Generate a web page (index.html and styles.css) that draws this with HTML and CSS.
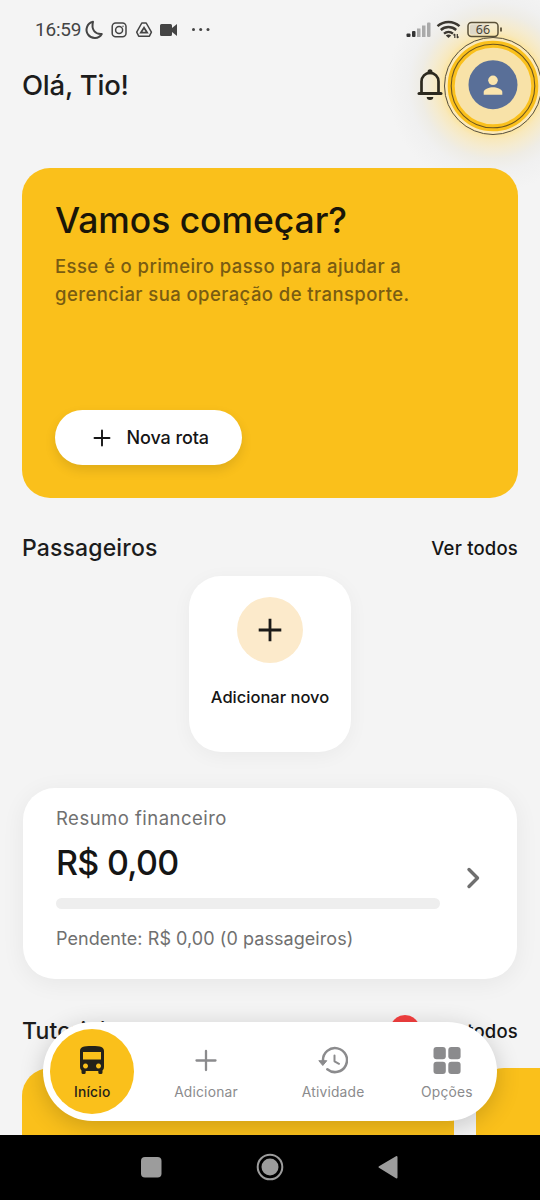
FILE: index.html
```html
<!DOCTYPE html>
<html lang="pt-BR">
<head>
<meta charset="utf-8">
<meta name="viewport" content="width=device-width, initial-scale=1">
<title>Início</title>
<link rel="stylesheet" href="styles.css">
</head>
<body>
<div class="app">
  <div class="status">
    <div class="status-left">
      <span class="clock">16:59</span>
      <svg class="status-icons" width="130" height="24" viewBox="0 0 130 24" fill="none" stroke="#444" stroke-width="1.800">
        <path d="M9 3.800A8.200 8.200 0 1 0 17.800 16C11 16.500 7 11.500 9 3.800Z" stroke-width="2" stroke-linejoin="round"/>
        <rect x="28.200" y="5" width="13.800" height="13.800" rx="3.500" stroke-width="1.500"/>
        <circle cx="35.100" cy="12" r="3.500" stroke-width="1.500"/><circle cx="39" cy="8.200" r=".7" fill="#444" stroke="none"/>
        <path d="M57.800 5h4.400l5.200 9.200-2 4H54.700l-2-4Z" stroke-width="1.500" stroke-linejoin="round"/>
        <path d="M60 9.700l-3.200 5h6.400Z" stroke-width="1.700"/>
        <path d="M77.500 6h9q1.500 0 1.500 1.500V10l5-4v12l-5-4v2.500q0 1.500-1.500 1.500h-9q-1.500 0-1.500-1.500v-9q0-1.500 1.500-1.500Z" fill="#444" stroke="none"/>
        <g fill="#444" stroke="none"><circle cx="109.500" cy="11.500" r="1.500"/><circle cx="116.700" cy="11.500" r="1.500"/><circle cx="124" cy="11.500" r="1.500"/></g>
      </svg>
    </div>
    <svg class="status-right" width="100" height="24" viewBox="0 0 100 24">
      <g fill="#333"><rect x="1.500" y="15.500" width="4" height="3.500" rx="1"/><rect x="7" y="13" width="3.500" height="6" rx="1"/></g>
      <g fill="#aaa"><rect x="12" y="10.500" width="3.500" height="8.500"/><rect x="17" y="7.500" width="3.500" height="11.500"/><rect x="22" y="4.500" width="3.500" height="14.500" rx="1"/></g>
      <g fill="none" stroke="#3b3730" stroke-width="2.400"><path d="M32.500 8.200a16.500 16.500 0 0 1 22 0"/><path d="M35.800 12a11.500 11.500 0 0 1 15.400 0"/><path d="M39 15.700a7 7 0 0 1 9 0"/></g>
      <path d="M40.800 17.500q2.700-1.800 5.400 0L43.500 20Z" fill="#3b3730"/>
      <path d="M49.800 20v-4m-1.300 1.300L49.800 16M52.300 16v4m1.300-1.300L52.300 20" stroke="#3b3730" stroke-width="1.200" fill="none"/>
      <rect x="63" y="4.500" width="30" height="14" rx="3.500" fill="none" stroke="#5a5038" stroke-width="1.500"/>
      <rect x="65" y="6.500" width="17" height="10" rx="1.500" fill="#ded8c8"/>
      <path d="M96 9.500v4" stroke="#5a5038" stroke-width="1.800"/>
      <text class="battery" x="78" y="16" text-anchor="middle">66</text>
    </svg>
  </div>
  <header class="header">
    <h1 class="hello">Olá, Tio!</h1>
    <div class="header-actions">
      <svg class="bell" width="26" height="34" viewBox="0 0 26 34">
        <path d="M4.500 25V13.500a8.500 8.700 0 0 1 17 0V25" fill="none" stroke="#2c291f" stroke-width="2.700"/>
        <path d="M2 25.500h22" stroke="#2c291f" stroke-width="3" stroke-linecap="round"/>
        <circle cx="13" cy="3.700" r="2.500" fill="#2c291f"/>
        <path d="M9.700 29h6.600a3.300 3 0 0 1-6.600 0Z" fill="#2c291f"/>
      </svg>
      <div class="avatar">
        <svg class="avatar-rings" width="220" height="220" viewBox="0 0 220 220">
          <circle cx="110" cy="110" r="41.500" fill="#f8e2a8"/>
          <circle cx="110" cy="110" r="46.500" fill="none" stroke="#fbe9b8" stroke-width="4"/>
          <circle cx="110" cy="110" r="41.800" fill="none" stroke="#fac01c" stroke-width="7"/>
          <circle cx="110" cy="110" r="41.800" fill="none" stroke="#6d5620" stroke-width="1.100"/>
          <circle cx="110" cy="110" r="48.500" fill="none" stroke="#544d3b" stroke-width="1"/>
          <circle cx="110" cy="108.700" r="24.500" fill="#596f98"/>
          <circle cx="110" cy="104.300" r="4.800" fill="#fbe5ad"/>
          <path d="M100.700 118.700v-2.600c0-3.200 6-4.900 9.300-4.900s9.300 1.700 9.300 4.900v2.600Z" fill="#fbe5ad"/>
        </svg>
      </div>
    </div>
  </header>
  <main class="content">
    <section class="hero">
      <h2 class="hero-title">Vamos começar?</h2>
      <p class="hero-text">Esse é o primeiro passo para ajudar a<br>gerenciar sua operação de transporte.</p>
      <button class="new-route">
        <svg width="18" height="18" viewBox="0 0 18 18"><path d="M9 1.500v15M1.500 9h15" stroke="#151515" stroke-width="1.900" stroke-linecap="round"/></svg>
        <span>Nova rota</span>
      </button>
    </section>
    <div class="section-head passengers-head"><h3 class="section-title">Passageiros</h3><a class="see-all">Ver todos</a></div>
    <div class="add-card">
      <span class="add-circle"><svg width="24" height="24" viewBox="0 0 24 24"><path d="M12 .700v22.600M.700 12h22.600" stroke="#1b1a18" stroke-width="2.800"/></svg></span>
      <span class="add-label">Adicionar novo</span>
    </div>
    <section class="finance">
      <div class="finance-body">
        <div class="finance-title">Resumo financeiro</div>
        <div class="amount">R$ 0,00</div>
        <div class="bar"></div>
        <div class="pending">Pendente: R$ 0,00 (0 passageiros)</div>
      </div>
      <svg class="chevron" width="16" height="24" viewBox="0 0 16 24"><path d="M4 3.500L12.500 12 4 20.500" fill="none" stroke="#6f6f6f" stroke-width="3.400" stroke-linecap="round" stroke-linejoin="round"/></svg>
    </section>
    <div class="section-head tutorials-head"><h3 class="section-title">Tutoriais</h3><span class="badge"></span><a class="see-all">Ver todos</a></div>
    <div class="tutorials"><div class="tutorial"></div><div class="tutorial"></div></div>
  </main>
  <nav class="tabs">
    <div class="tab active">
      <svg width="24" height="30" viewBox="0 0 24 30"><path fill="#24221a" fill-rule="evenodd" d="M0 6C0 2.300 3 1 12 1s12 1.300 12 5v16q0 2.500-1.500 3.500v2q0 1.500-1.500 1.500h-1.200q-1.500 0-1.500-1.500V26H5.700v1.500Q5.700 29 4.200 29H3q-1.500 0-1.500-1.500v-2Q0 24.500 0 22Zm3 1v7.500h18V7ZM5.500 18.500a2.500 2.500 0 1 0 .01 0Zm13 0a2.500 2.500 0 1 0 .01 0Z"/></svg>
      <span>Início</span>
    </div>
    <div class="tab">
      <svg width="22" height="30" viewBox="0 0 22 30"><path d="M11 6v19M1.500 15.500h19" stroke="#8b8b8d" stroke-width="2.300" stroke-linecap="round"/></svg>
      <span>Adicionar</span>
    </div>
    <div class="tab">
      <svg width="30" height="30" viewBox="0 0 30 30"><g fill="none" stroke="#8b8b8d" stroke-width="2.500" stroke-linecap="round" stroke-linejoin="round"><path d="M5 15.500a12 12 0 1 1 4.300 8.800"/><path d="M16.500 10.500v5.800l4.500 2.500" stroke-width="2"/></g><path d="M.8 15.700h8l-4 4.800Z" fill="#8b8b8d" stroke="#8b8b8d" stroke-linejoin="round"/></svg>
      <span>Atividade</span>
    </div>
    <div class="tab">
      <svg width="28" height="30" viewBox="0 0 28 30"><g fill="#8b8b8d"><rect x=".5" y="2" width="12.300" height="12.300" rx="3"/><rect x="15.300" y="2" width="12.300" height="12.300" rx="3"/><rect x=".5" y="16.700" width="12.300" height="12.300" rx="3"/><rect x="15.300" y="16.700" width="12.300" height="12.300" rx="3"/></g></svg>
      <span>Opções</span>
    </div>
  </nav>
  <div class="system-nav">
    <svg width="258" height="30" viewBox="0 0 258 30"><rect x="0" y="5" width="20.500" height="20.500" rx="4" fill="#9c9c9c"/><circle cx="129" cy="15" r="12.300" fill="none" stroke="#9c9c9c" stroke-width="2"/><circle cx="129" cy="15" r="8.500" fill="#9c9c9c"/><path d="M238.500 15L255.500 5v20.500Z" fill="#9c9c9c" stroke="#9c9c9c" stroke-width="2" stroke-linejoin="round"/></svg>
  </div>
</div>
</body>
</html>
```
FILE: styles.css
```css
* { box-sizing: border-box; }
body { margin: 0; background: #f4f4f4; font-family: Inter, "Liberation Sans", sans-serif; color: #151515; }
h1, h2, h3, p { margin: 0; font-weight: 500; }
svg { display: block; flex: none; }
.app { position: relative; width: 540px; height: 1200px; overflow: hidden; display: flex; flex-direction: column; }
.status { flex: none; height: 60px; padding: 18px 35px 0; display: flex; justify-content: space-between; }
.status-left { display: flex; gap: 2px; }
.clock { font: 400 19px/24px Roboto, sans-serif; color: #444; width: 47px; letter-spacing: -.2px; white-space: nowrap; }
.status-right { position: relative; z-index: 2; }
.battery { font: 400 12.500px "Noto Sans", sans-serif; fill: #4a4435; }
.header { flex: none; height: 50px; padding-left: 22px; display: flex; justify-content: space-between; align-items: center; }
.hello { font-size: 27.500px; line-height: 34px; letter-spacing: -.25px; color: #1c1c1c; }
.header-actions { display: flex; align-items: center; }
.bell { position: relative; z-index: 2; }
.avatar { width: 97px; height: 50px; position: relative; }
.avatar-rings { position: absolute; left: -60px; top: -84.500px; z-index: 1; background: radial-gradient(circle, #fbe5a4 0 49px, #f9e6b0cc 54px, #f5e7bfaa 62px, #eae6d988 73px, #e9e9e955 85px, transparent 106px); }
.content { flex: 1; padding: 58px 22px 0; display: flex; flex-direction: column; }
.hero { position: relative; z-index: 2; height: 330px; flex: none; border-radius: 28px; background: #fac01b; padding: 32px 33px 33px; display: flex; flex-direction: column; align-items: flex-start; }
.hero-title { font-size: 35.500px; line-height: 42px; letter-spacing: -.05px; white-space: nowrap; color: #1a1608; }
.hero-text { margin-top: 10px; font-size: 18.500px; line-height: 28px; letter-spacing: .42px; color: #795c12; white-space: nowrap; }
.new-route { margin-top: auto; width: 187px; height: 55px; border: 0; border-radius: 28px; background: #fff; display: flex; align-items: center; gap: 16px; padding: 0 0 0 37.500px; font: 500 18px/24px Inter, sans-serif; letter-spacing: -.1px; color: #151515; white-space: nowrap; box-shadow: 0 5px 12px #0000001c; }
.section-head { flex: none; display: flex; align-items: center; height: 34px; }
.passengers-head { margin-top: 33px; }
.section-title { font-size: 23px; line-height: 34px; letter-spacing: .15px; color: #1c1c1c; }
.see-all { margin-left: auto; font-size: 18.500px; line-height: 34px; font-weight: 500; letter-spacing: .2px; }
.add-card { flex: none; align-self: center; width: 162px; height: 176px; margin-top: 11px; padding-top: 21px; border-radius: 32px; background: #fff; box-shadow: 0 4px 20px #0000000b; display: flex; flex-direction: column; align-items: center; }
.add-circle { width: 66px; height: 66px; border-radius: 50%; background: #fceacb; display: grid; place-items: center; }
.add-label { margin-top: 22px; font-size: 16.500px; line-height: 24px; font-weight: 500; white-space: nowrap; }
.finance { flex: none; height: 191px; margin: 36px 1px 0; padding: 18px 36px 0 33px; border-radius: 32px; background: #fff; box-shadow: 0 4px 24px #0000000f; display: flex; justify-content: space-between; }
.finance-body { width: 384px; white-space: nowrap; }
.finance-title { font-size: 18.500px; line-height: 24px; letter-spacing: .48px; color: #707070; }
.amount { margin-top: 12px; font-size: 34px; line-height: 42px; letter-spacing: -.7px; font-weight: 500; }
.bar { margin-top: 14px; height: 11px; border-radius: 6px; background: #eee; }
.pending { margin-top: 18px; font-size: 18px; line-height: 24px; letter-spacing: .06px; color: #707070; }
.chevron { margin-top: 60px; }
.tutorials-head { margin-top: 35px; position: relative; }
.badge { position: absolute; left: 368px; top: 1px; width: 30px; height: 30px; border-radius: 50%; background: #f43f3f; }
.tutorials { flex: none; display: flex; gap: 22px; margin-top: 20px; }
.tutorial { flex: none; width: 432px; height: 150px; border-radius: 28px; background: #fac01b; }
.tabs { position: absolute; z-index: 3; left: 43px; top: 1022px; width: 454px; height: 99px; border-radius: 50px; background: #fff; box-shadow: 0 5px 24px #00000030; display: flex; align-items: center; padding-left: 7px; }
.tab { width: 128px; height: 85px; display: flex; flex-direction: column; align-items: center; padding-top: 16px; gap: 8px; font-size: 13.800px; line-height: 18px; letter-spacing: .2px; color: #8b8b8d; }
.tab.active { width: 85px; margin-right: 8px; border-radius: 50%; background: #fac01b; color: #24221a; font-weight: 500; }
.tab:last-child { width: 101px; }
.system-nav { position: absolute; z-index: 4; left: 0; bottom: 0; width: 540px; height: 65px; padding-bottom: 1px; background: #000; display: flex; justify-content: center; align-items: center; }
```
